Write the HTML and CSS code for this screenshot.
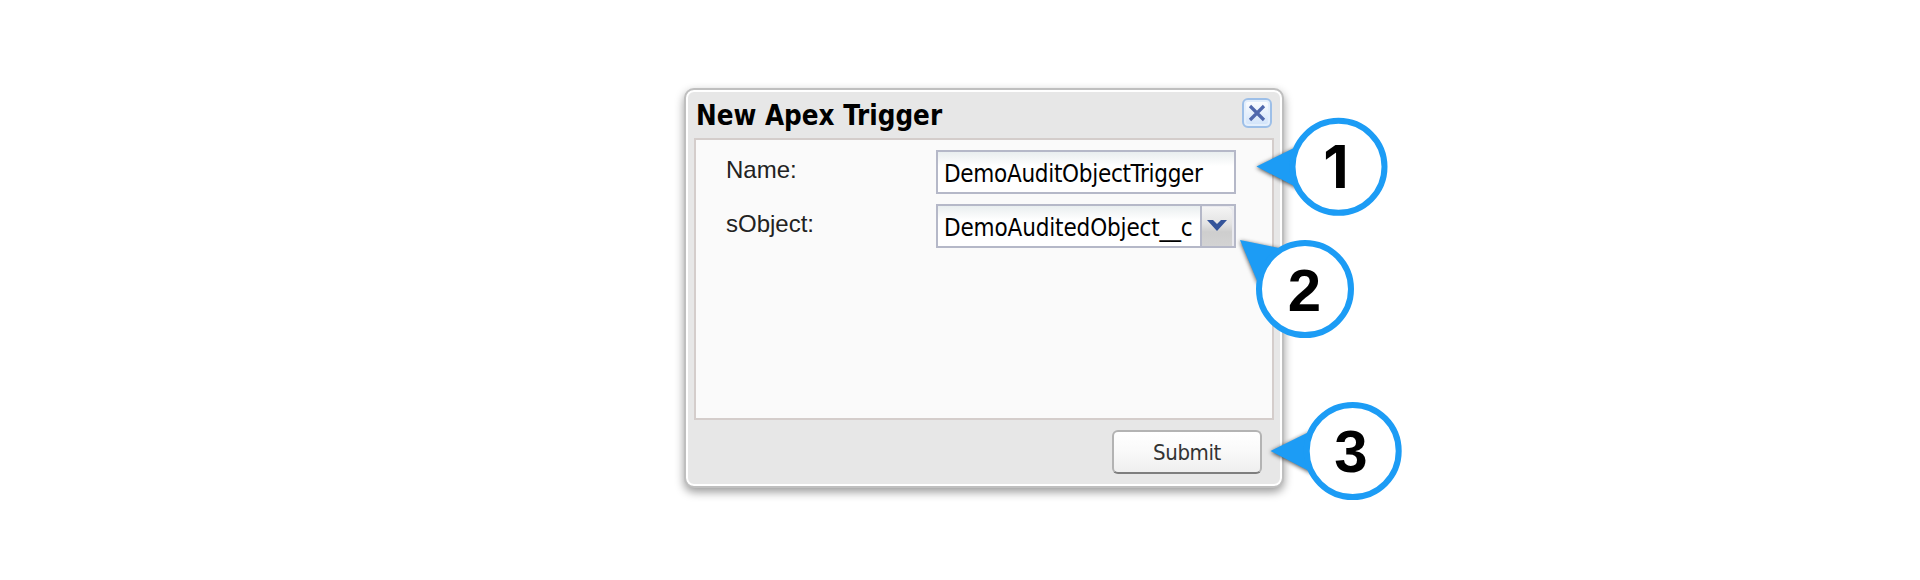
FILE: index.html
```html
<!DOCTYPE html>
<html lang="en">
<head>
<meta charset="utf-8">
<title>New Apex Trigger</title>
<link rel="stylesheet" href="styles.css">
</head>
<body>
<main class="stage">
  <section class="window">
    <header class="window-header">
      <h1 class="window-title">New Apex Trigger</h1>
      <button class="close" aria-label="Close">
        <svg width="18" height="18" viewBox="0 0 18 18"><path d="M2 2L16 16M16 2L2 16" stroke="#5068ad" stroke-width="3.2" fill="none"/></svg>
      </button>
    </header>
    <div class="window-body">
      <div class="row">
        <span class="label">Name:</span>
        <div class="field"><span class="value value-name">DemoAuditObjectTrigger</span></div>
      </div>
      <div class="row">
        <span class="label">sObject:</span>
        <div class="field">
          <span class="value value-object">DemoAuditedObject__c</span>
          <span class="trigger"><svg width="20" height="12" viewBox="0 0 20 12"><path d="M0 0H6L10 4L14 0H20L10 11Z" fill="#34549a"/></svg></span>
        </div>
      </div>
    </div>
    <footer class="window-footer">
      <button class="submit"><span class="submit-text">Submit</span></button>
    </footer>
  </section>
  <svg class="callouts" width="1920" height="580" viewBox="0 0 1920 580">
    <g class="pointers">
      <path d="M1256.5 166.5L1298 146V188Z"/>
      <path d="M1240 240L1284 249L1258 283Z"/>
      <path d="M1270.5 451L1312 430.5V472.5Z"/>
    </g>
    <g class="rings">
      <circle cx="1338.5" cy="166.8" r="46"/>
      <circle cx="1305" cy="289" r="46"/>
      <circle cx="1352.7" cy="451" r="46"/>
    </g>
    <g class="digits">
      <text class="digit-one" x="1336" y="188">1</text>
      <text x="1304.5" y="311">2</text>
      <text x="1351" y="472">3</text>
    </g>
  </svg>
</main>
</body>
</html>
```
FILE: styles.css
```css
* { box-sizing: border-box; }
body { margin: 0; background: #fff; font-family: "Liberation Sans", Arial, sans-serif; }
.stage { position: relative; width: 1920px; height: 580px; padding: 88px 0 0 684px; overflow: hidden; }
.window {
  width: 600px; height: 400px; display: flex; flex-direction: column;
  background: #e7e7e7; border: 2px solid #bfbfbf; border-radius: 10px;
  box-shadow: inset 0 0 0 2px #fff, 0 4px 10px rgba(0,0,0,.4);
  padding: 0 8px;
}
.window-header { height: 48px; display: flex; justify-content: space-between; padding: 8px 2px 0 2px; }
.window-title { margin: 0; font: bold 27.5px/34px "DejaVu Sans Condensed", "DejaVu Sans", sans-serif; font-stretch: condensed; letter-spacing: 0; color: #000; white-space: nowrap; }
.close {
  width: 30px; height: 30px; padding: 0; display: flex; align-items: center; justify-content: center;
  border: 2px solid #9dbfe8; border-radius: 6px; background: linear-gradient(#fff, #cfe2fa);
  box-shadow: inset 0 0 0 2px #e4effc;
}
.window-body {
  width: 580px; height: 282px; background: #fafafa; border: 2px solid #d4cdcb;
  padding: 10px 36px 0 30px; display: flex; flex-direction: column; gap: 10px;
}
.row { display: flex; justify-content: space-between; height: 44px; }
.label { font-size: 24px; line-height: 40px; color: #222; }
.field {
  width: 300px; height: 44px; flex: none; display: flex; justify-content: space-between;
  border: 2px solid #b5b8c8; background: linear-gradient(#e9eeef, #fff 14px);
}
.value { flex: 1; min-width: 0; padding-left: 6px; font: 24px/44px "DejaVu Sans Condensed", "DejaVu Sans", sans-serif; font-stretch: condensed; color: #000; white-space: nowrap; }
.value-name { letter-spacing: -0.3px; }
.value-object { letter-spacing: -0.15px; }
.trigger {
  width: 34px; height: 40px; flex: none; display: flex; justify-content: center; padding: 14px 2px 0 0;
  border-left: 2px solid #b5b8c8; background: linear-gradient(#f5f5f5, #e3e3e3 45%, #cecece 65%, #d3d3d3);
  border-radius: 0 5px 0 0; box-shadow: inset -2px 1px 0 #e9e9ee;
}
.window-footer { display: flex; justify-content: flex-end; padding: 10px 12px 0 0; }
.submit {
  width: 150px; height: 44px; padding: 2px 0 0; border: 2px solid #b3b3b3; border-bottom-color: #7e7e7e;
  border-radius: 6px; background: linear-gradient(#fff, #f9f9f9 50%, #efefef);
  font: 22px/38px "DejaVu Sans Condensed", "DejaVu Sans", sans-serif; font-stretch: condensed; letter-spacing: -0.4px; color: #333;
}
.callouts { position: absolute; left: 0; top: 0; }
.pointers { fill: #1c9cf5; filter: drop-shadow(0 1px 2px rgba(0,0,0,.7)); }
.rings { fill: #fff; stroke: #1c9cf5; stroke-width: 6px; }
.digits { font: bold 60px "Liberation Sans", Arial, sans-serif; fill: #000; text-anchor: middle; }
.digit-one { font-family: Inter, sans-serif; font-size: 59px; }
```
